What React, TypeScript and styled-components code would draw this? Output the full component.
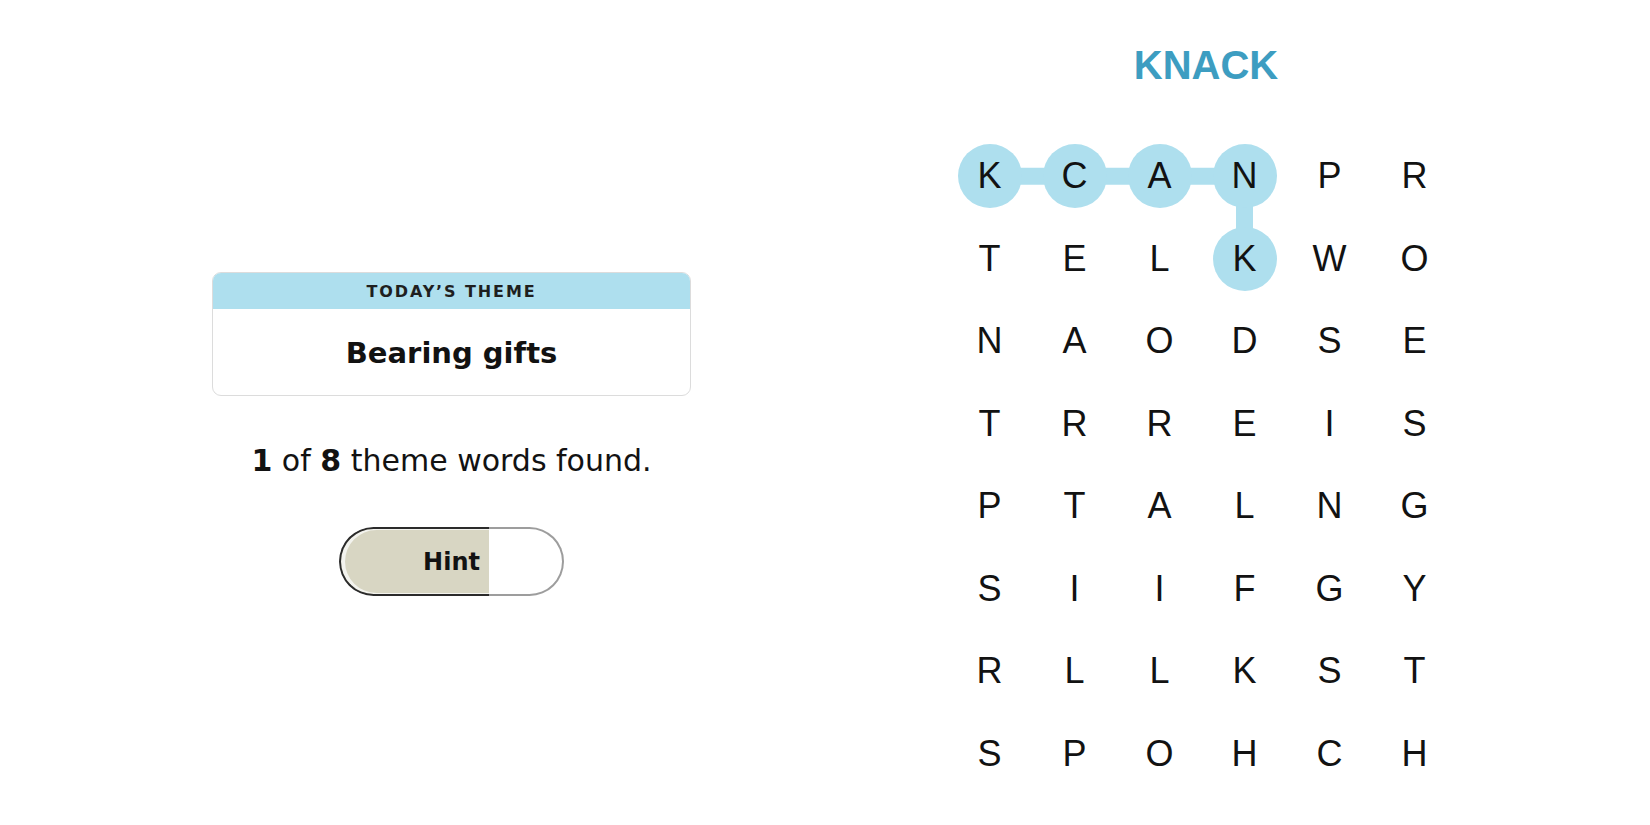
import styled, { createGlobalStyle } from 'styled-components';

const GlobalStyle = createGlobalStyle`
  html, body {
    margin: 0;
    padding: 0;
    background: #ffffff;
  }
  body {
    font-family: "Liberation Sans", Arial, sans-serif;
    color: #121212;
  }
`;

const CELL_W = 85;
const CELL_H = 82.5;

const grid = [
  'KCANPR',
  'TELKWO',
  'NAODSE',
  'TRREIS',
  'PTALNG',
  'SIIFGY',
  'RLLKST',
  'SPOHCH',
];

// path of the word currently being spelled: [row, col]
const path: [number, number][] = [
  [0, 0],
  [0, 1],
  [0, 2],
  [0, 3],
  [1, 3],
];

const Page = styled.main`
  display: grid;
  grid-template-columns: 900px 604px;
  width: 1650px;
  height: 825px;
  overflow: hidden;
`;

const LeftPanel = styled.section`
  display: flex;
  flex-direction: column;
  align-items: center;
  padding-top: 272px;
  padding-left: 3px;
  font-family: "DejaVu Sans", "Liberation Sans", sans-serif;
`;

const ThemeCard = styled.div`
  width: 479px;
  border: 1px solid #dcdcdc;
  border-radius: 9px;
  overflow: hidden;
  box-sizing: border-box;
`;

const ThemeHeader = styled.div`
  height: 36px;
  background: #aedfee;
  display: flex;
  align-items: center;
  justify-content: center;
  font-size: 16px;
  font-weight: 600;
  letter-spacing: 1.9px;
  color: #1f1f1f;
  text-transform: uppercase;
`;

const ThemeBody = styled.div`
  height: 86px;
  display: flex;
  align-items: center;
  justify-content: center;
  font-size: 29px;
  font-weight: 700;
  color: #121212;
  padding-top: 2px;
  box-sizing: border-box;
`;

const Progress = styled.p`
  margin: 47px 0 0;
  font-size: 30px;
  line-height: 36px;
  color: #121212;

  b {
    font-weight: 700;
  }
`;

const HintButton = styled.button`
  position: relative;
  margin-top: 48px;
  width: 225px;
  height: 69px;
  border: none;
  padding: 0;
  border-radius: 35px;
  background: #ffffff;
  box-shadow: inset 0 0 0 2px #9d9d9d;
  overflow: hidden;
  cursor: pointer;
  font-family: "DejaVu Sans", "Liberation Sans", sans-serif;
`;

const HintFill = styled.span<{ $pct: number }>`
  position: absolute;
  left: 0;
  top: 0;
  bottom: 0;
  width: ${(p) => p.$pct}%;
  box-sizing: border-box;
  border: 2px solid #2b2b2b;
  border-right: none;
  border-radius: 35px 0 0 35px;
  background: #d8d6c3;
  box-shadow: inset 3px 0 0 1px #f3f3ee;
`;

const HintLabel = styled.span`
  position: relative;
  font-size: 24px;
  font-weight: 600;
  color: #121212;
`;

const RightPanel = styled.section`
  display: flex;
  flex-direction: column;
  align-items: center;
  padding-top: 41px;
`;

const Spangram = styled.h1`
  margin: 0;
  font-size: 40px;
  line-height: 48px;
  font-weight: 700;
  color: #3d9dc1;
  padding-left: 8px;
`;

const Board = styled.div`
  position: relative;
  margin-top: 46px;
  display: grid;
  grid-template-columns: repeat(6, ${CELL_W}px);
  grid-auto-rows: ${CELL_H}px;
`;

const Connectors = styled.svg`
  position: absolute;
  left: 0;
  top: 0;
  pointer-events: none;
`;

const Cell = styled.div`
  position: relative;
  display: flex;
  align-items: center;
  justify-content: center;
`;

const Letter = styled.span<{ $selected: boolean }>`
  width: 64px;
  height: 64px;
  border-radius: 50%;
  display: flex;
  align-items: center;
  justify-content: center;
  font-size: 36px;
  font-weight: 400;
  color: #121212;
  background: ${(p) => (p.$selected ? '#aedfee' : 'transparent')};
`;

const isSelected = (r: number, c: number) =>
  path.some(([pr, pc]) => pr === r && pc === c);

const center = ([r, c]: [number, number]) => ({
  x: c * CELL_W + CELL_W / 2,
  y: r * CELL_H + CELL_H / 2,
});

export default function App() {
  const points = path.map(center);

  return (
    <>
      <GlobalStyle />
      <Page>
        <LeftPanel>
          <ThemeCard>
            <ThemeHeader>Today’s theme</ThemeHeader>
            <ThemeBody>Bearing gifts</ThemeBody>
          </ThemeCard>
          <Progress>
            <b>1</b> of <b>8</b> theme words found.
          </Progress>
          <HintButton>
            <HintFill $pct={66.5} />
            <HintLabel>Hint</HintLabel>
          </HintButton>
        </LeftPanel>

        <RightPanel>
          <Spangram>KNACK</Spangram>
          <Board>
            <Connectors width={CELL_W * 6} height={CELL_H * 8}>
              <polyline
                points={points.map((p) => `${p.x},${p.y}`).join(' ')}
                fill="none"
                stroke="#aedfee"
                strokeWidth={17}
                strokeLinejoin="round"
              />
            </Connectors>
            {grid.map((row, r) =>
              row.split('').map((ch, c) => (
                <Cell key={`${r}-${c}`}>
                  <Letter $selected={isSelected(r, c)}>{ch}</Letter>
                </Cell>
              ))
            )}
          </Board>
        </RightPanel>
      </Page>
    </>
  );
}
